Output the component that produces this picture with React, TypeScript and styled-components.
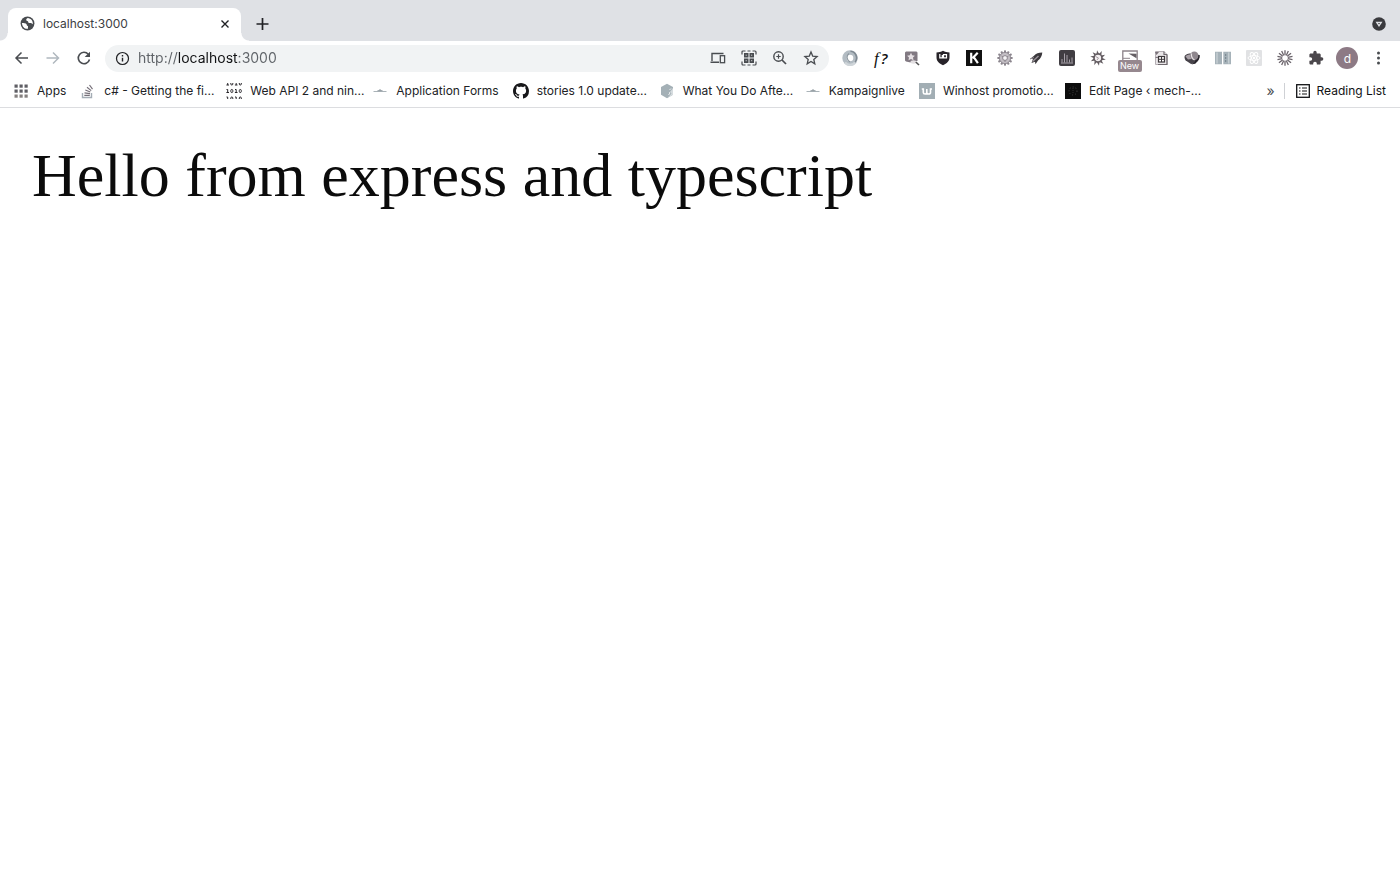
import React from 'react';
import styled, { createGlobalStyle } from 'styled-components';

const GlobalStyle = createGlobalStyle`
  * { box-sizing: border-box; }
  body {
    margin: 0;
    background: #fff;
    color: #202124;
    font-family: Inter, "Liberation Sans", sans-serif;
  }
`;

const Window = styled.div`
  display: flex;
  flex-direction: column;
  min-height: 100vh;
`;

const TabStrip = styled.header`
  display: flex;
  align-items: flex-end;
  height: 41px;
  padding: 0 6px 0 8px;
  background: #dfe1e5;
`;

const Tab = styled.div`
  position: relative;
  display: flex;
  align-items: center;
  width: 233px;
  height: 33px;
  padding: 0 6px 2px 12px;
  border-radius: 8px 8px 0 0;
  background: #fff;

  &::before,
  &::after {
    content: '';
    position: absolute;
    bottom: 0;
    width: 8px;
    height: 8px;
  }
  &::before {
    left: -8px;
    background: radial-gradient(circle at 0 0, transparent 7px, #fff 8px);
  }
  &::after {
    right: -8px;
    background: radial-gradient(circle at 100% 0, transparent 7px, #fff 8px);
  }
`;

const TabTitle = styled.span`
  flex: 1;
  margin-left: 8px;
  font-size: 12px;
  line-height: 16px;
  color: #3c4043;
`;

const IconButton = styled.button<{ $size?: number }>`
  display: flex;
  align-items: center;
  justify-content: center;
  flex: none;
  width: ${(p) => p.$size ?? 31}px;
  height: ${(p) => p.$size ?? 31}px;
  padding: 0;
  border: 0;
  background: none;
  color: #494c50;
  font: inherit;
`;

const TabActions = styled.div`
  display: flex;
  flex: 1;
  align-items: center;
  justify-content: space-between;
  height: 33px;
  padding: 0 0 2px 6px;
`;

const Toolbar = styled.nav`
  display: flex;
  align-items: center;
  height: 34px;
  padding: 0 6px;
`;

const Omnibox = styled.form`
  display: flex;
  flex: 1;
  align-items: center;
  min-width: 0;
  height: 27px;
  margin: 0 5px 0 6px;
  padding: 0 3px 0 10px;
  border-radius: 14px;
  background: #f1f3f4;
`;

const Address = styled.input`
  flex: 1;
  min-width: 0;
  height: 20px;
  margin-left: 8px;
  padding: 0;
  border: 0;
  outline: 0;
  font-family: inherit;
  font-size: 14px;
  line-height: 20px;
  color: #202124;
  background: linear-gradient(90deg, #5f6368 40px, #111214 40px, #111214 100px, #5f6368 100px);
  background-clip: text;
  -webkit-text-fill-color: transparent;
`;

const Extensions = styled.div`
  display: grid;
  grid-template-columns: repeat(18, 1fr);
  justify-items: center;
  align-items: center;
  width: 560px;
`;

const FormulaMark = styled.span`
  font-family: "Liberation Serif", serif;
  font-size: 17px;
  font-style: italic;
  line-height: 20px;
  color: #111;
`;

const QuestionMark = styled.span`
  margin-left: 2px;
  font-family: "Open Sans", sans-serif;
  font-size: 15px;
  font-weight: 600;
`;

const Avatar = styled.span`
  display: flex;
  align-items: center;
  justify-content: center;
  width: 22px;
  height: 22px;
  border-radius: 50%;
  background: #8d7a85;
  font-size: 12px;
  color: #fff;
`;

const BadgedIcon = styled.span`
  position: relative;
  display: flex;
`;

const Badge = styled.span`
  position: absolute;
  top: 10px;
  left: -4px;
  width: 24px;
  border-radius: 2px;
  background: #96888f;
  font-size: 9px;
  line-height: 12px;
  text-align: center;
  color: #fff;
`;

const BookmarkBar = styled.nav`
  display: flex;
  align-items: center;
  height: 33px;
  padding: 0 14px 0 13px;
  border-bottom: 1px solid #dcdde0;
`;

const Bookmarks = styled.div`
  display: flex;
  flex: 1;
  gap: 14px;
  min-width: 0;
`;

const Bookmark = styled.a`
  display: flex;
  flex: none;
  align-items: center;
  gap: 8px;
  color: #202124;
  text-decoration: none;
`;

const BookmarkTitle = styled.span<{ $clipped?: boolean }>`
  width: ${(p) => (p.$clipped ? '108px' : 'auto')};
  font-size: 12px;
  line-height: 16px;
  white-space: nowrap;
`;

const Overflow = styled(IconButton)`
  font-size: 14px;
  padding-bottom: 2px;
`;

const ReadingList = styled.button`
  display: flex;
  align-items: center;
  gap: 6px;
  height: 16px;
  padding: 0 0 0 10px;
  border: 0;
  border-left: 1px solid #cfd1d5;
  background: none;
  font-family: inherit;
  font-size: 12px;
  line-height: 16px;
  color: #111214;
`;

const Page = styled.main`
  flex: 1;
  padding: 31px 32px;
  font-family: "Liberation Serif", "Times New Roman", serif;
  font-size: 62px;
  line-height: 72px;
  color: #0b0b0b;
`;

type IconProps = { size?: number; children: React.ReactNode };

const Line = ({ size = 16, children }: IconProps) => (
  <svg width={size} height={size} viewBox="0 0 16 16" fill="none" stroke="currentColor" strokeWidth="1.5" aria-hidden="true">
    {children}
  </svg>
);

const Solid = ({ size = 16, children }: IconProps) => (
  <svg width={size} height={size} viewBox="0 0 16 16" fill="currentColor" aria-hidden="true">
    {children}
  </svg>
);

const rays = (count: number) => Array.from({ length: count }, (_, i) => (360 / count) * i);

const Globe = () => (
  <Solid size={15}>
    <circle cx="8" cy="8" r="7.4" fill="#484b4f" />
    <path d="M2 7.5c2 .2 4.200.1 5 1.300.5 1 .1 1.700 1.500 1.900v2.800c-3 .8-6-1.500-6.500-6zM8.200 2.200c-1.200.7-1.800 1.300-1.500 2.300.3.800 2 .5 2 1.500 0 1.200 1 1.700 2.300 1.500.8-.1 1.500.6 2.600 1.200.6-3-1.800-6.300-5.400-6.500z" fill="#fff" />
  </Solid>
);

const ExtRing = () => (
  <Solid>
    <circle cx="8" cy="8" r="5.500" fill="none" stroke="#b3bcc3" strokeWidth="4.400" />
    <path d="M3 12.500A6.500 6.500 0 0 0 14 11" fill="none" stroke="#cfd5d9" strokeWidth="2.500" />
    <path d="M8.500 1.200a6.700 6.700 0 0 1 4.500 11" fill="none" stroke="#7f8992" strokeWidth="1.600" />
    <path d="M7 3.500C4 6 4.500 9.500 8 12" fill="none" stroke="#8d979f" strokeWidth="1.200" />
  </Solid>
);

const ExtSearchStar = () => (
  <Solid>
    <path d="M2 1.500h10.500l1 1v8.500H7.500l-1 1.500-4.500-1-1-1v-8z" fill="#817982" />
    <path d="M7 2.800l1.200 2.500 2.700.4-1.900 1.900.5 2.700L7 9l-2.500 1.300.5-2.700-1.900-1.900 2.700-.4z" fill="#e6e0e4" />
    <ellipse cx="9.500" cy="12" rx="3" ry="1.700" fill="#e3dfe2" />
    <path d="M11.800 12l3.200 3" stroke="#555" strokeWidth="1.600" />
  </Solid>
);

const ExtShield = () => (
  <Solid>
    <path d="M8 .8c2 1 4 1.500 6.500 1.600v4.800c0 4-2.600 6.300-6.500 8-3.900-1.700-6.500-4-6.500-8V2.400C4 2.300 6 1.800 8 .8z" fill="#272329" />
    <path d="M4.800 4v3.800h2.500V5M8.500 4.600h3v3.200h-3z" fill="none" stroke="#fff" strokeWidth="1.200" />
  </Solid>
);

const ExtK = () => (
  <Solid>
    <rect width="16" height="16" fill="#111" />
    <path d="M5.200 2.800v10.400M11.700 2.800L6.500 8.200M7.700 7l4.200 6.200" stroke="#fff" strokeWidth="2.200" />
  </Solid>
);

const ExtGear = () => (
  <Solid>
    {rays(12).map((a) => (
      <rect key={a} x="7" y=".4" width="2" height="3" fill="#8b858d" transform={`rotate(${a} 8 8)`} />
    ))}
    <circle cx="8" cy="8" r="5.600" fill="#c3bec4" stroke="#918b93" />
    <circle cx="8" cy="8" r="2.400" fill="#f5f3f5" stroke="#8c868e" />
    <path d="M4.500 6l1.500 1M11.500 6L10 7M8 12v-2" stroke="#8c868e" />
  </Solid>
);

const ExtRocket = () => (
  <Solid>
    <path d="M14.300 2.500C10.500 2.500 8 3.300 6 5.800L2 9l3-.2L3.500 13l3.500-1.200.5 2.400L10 10.500c2.600-2 4-4.500 4.300-8z" fill="#3b383c" />
    <path d="M4.500 11.500l6-5.500" stroke="#9b949b" strokeWidth="1.400" />
    <path d="M2 9l4-1.500" stroke="#8c868c" />
  </Solid>
);

const ExtChart = () => (
  <Solid>
    <rect width="16" height="16" rx="2" fill="#403d42" />
    <path d="M3 12.500V9M5.500 12.500v-9M8 12.500V5M10.500 12.500V9.500M13 12.500V7.500" stroke="#a7a1a9" strokeWidth="1" />
    <path d="M2 13h12" stroke="#a7a1a9" />
  </Solid>
);

const ExtCog = () => (
  <Solid>
    {rays(10).map((a) => (
      <path key={a} d="M6.500 4.500L7 .2l2.500 4.300z" fill="#625b60" transform={`rotate(${a} 8 8)`} />
    ))}
    <circle cx="8" cy="8" r="3.900" fill="#f4f0f2" stroke="#625b60" strokeWidth="1.500" />
    <path d="M5.500 6.500l3 1.500-1.500 2" stroke="#a59ca2" fill="none" />
  </Solid>
);

const ExtSheet = () => (
  <Solid>
    <path d="M.8 13V1h14.400v9" fill="#fff" stroke="#8d848a" strokeWidth="1.300" />
    <path d="M6.500 3.500l8 .2v4.500z" fill="#655f64" />
    <path d="M1 8.300h7" stroke="#8d848a" />
  </Solid>
);

const ExtDocument = () => (
  <Solid>
    <path d="M2.500 1.500h8.500l3 3v10H2.500z" fill="#e9e6e8" stroke="#b5afb4" strokeWidth="1" />
    <path d="M11 1.500v3h3M14 4.500v10H5" fill="none" stroke="#6f696e" strokeWidth="1.200" />
    <path d="M2 2h4l-2.500 3zM2 8l2-1.500L5.500 8" fill="#7a7279" />
    <rect x="5.500" y="6.500" width="6" height="5.500" fill="#fff" stroke="#3c383b" strokeWidth="1.200" />
    <path d="M8.500 6.500V12M5.500 9.300h6" stroke="#3c383b" />
  </Solid>
);

const ExtBall = () => (
  <Solid>
    <path d="M.5 7c0-2 3-3.500 6-3.500L15 5c1 3-.5 6.500-4 8.500L7 14 2.500 11C1 10 .5 8.500.5 7z" fill="#47434a" />
    <path d="M1.500 6.500c1-1.500 3-2 5-2L7.500 9 4 9.500z" fill="#aaa2a8" />
    <circle cx="10.300" cy="5.800" r="4.300" fill="#8f878e" />
    <path d="M7.500 3.500C7 6 8 8.500 10.500 10" stroke="#e8e3e6" fill="none" strokeWidth="1.300" />
    <path d="M15 5c.5 3-1.500 6-4 6.500" stroke="#27232a" fill="none" strokeWidth="1.300" />
    <path d="M7.500 14.500l5.500-4-1.500 3z" fill="#27232a" />
  </Solid>
);

const ExtBooks = () => (
  <Solid>
    <path d="M0 1.700h7v12.600H0zM8.300 1.700H16v12.600H8.300z" fill="#a6b2b9" />
    <path d="M2 2.500v11M13.800 2.500v11" stroke="#d3dadd" strokeWidth="1" />
    <path d="M10.700 4v8" stroke="#74828b" strokeDasharray="2 1" />
  </Solid>
);

const ExtReact = () => (
  <Solid>
    <rect width="16" height="16" rx="1" fill="#e1e2e4" />
    <g fill="none" stroke="#fff">
      <ellipse cx="8" cy="8" rx="6" ry="2.400" />
      <ellipse cx="8" cy="8" rx="6" ry="2.400" transform="rotate(60 8 8)" />
      <ellipse cx="8" cy="8" rx="6" ry="2.400" transform="rotate(120 8 8)" />
    </g>
    <circle cx="8" cy="8" r="1.200" fill="#fff" />
  </Solid>
);

const ExtBurst = () => (
  <Line>
    {rays(14).map((a) => (
      <path key={a} d="M8 .3v4.900" stroke="#696269" strokeWidth="1.300" transform={`rotate(${a} 8 8)`} />
    ))}
  </Line>
);

const ExtPuzzle = () => (
  <Solid>
    <path d="M13.700 7.300h-1V4.700c0-.7-.6-1.300-1.300-1.300H8.700v-1a1.700 1.700 0 0 0-3.400 0v1H2.700c-.7 0-1.300.6-1.300 1.300v2.500h1a1.800 1.800 0 0 1 0 3.600h-1v2.500c0 .7.6 1.300 1.300 1.300h2.500v-1a1.800 1.800 0 0 1 3.600 0v1h2.500c.7 0 1.300-.6 1.300-1.300v-2.600h1a1.700 1.700 0 0 0 .1-3.400z" fill="#4b474c" />
  </Solid>
);

const DotsMenu = () => (
  <Solid>
    <circle cx="8.500" cy="3" r="1.500" />
    <circle cx="8.500" cy="8" r="1.500" />
    <circle cx="8.500" cy="13" r="1.500" />
  </Solid>
);

const extensions: { label: string; icon: React.ReactNode }[] = [
  { label: 'JSON viewer', icon: <ExtRing /> },
  { label: 'Font finder', icon: <FormulaMark>f<QuestionMark>?</QuestionMark></FormulaMark> },
  { label: 'Saved searches', icon: <ExtSearchStar /> },
  { label: 'Shield', icon: <ExtShield /> },
  { label: 'K', icon: <ExtK /> },
  { label: 'Settings', icon: <ExtGear /> },
  { label: 'Rocket', icon: <ExtRocket /> },
  { label: 'Charts', icon: <ExtChart /> },
  { label: 'Debugger', icon: <ExtCog /> },
  { label: 'Screen capture', icon: <BadgedIcon><ExtSheet /><Badge>New</Badge></BadgedIcon> },
  { label: 'Documents', icon: <ExtDocument /> },
  { label: 'Sphere', icon: <ExtBall /> },
  { label: 'Reader', icon: <ExtBooks /> },
  { label: 'React tools', icon: <ExtReact /> },
  { label: 'Loom', icon: <ExtBurst /> },
  { label: 'Extensions', icon: <ExtPuzzle /> },
  { label: 'Profile', icon: <Avatar>d</Avatar> },
  { label: 'Menu', icon: <DotsMenu /> },
];

const AppsIcon = () => (
  <Solid>
    {[1.500, 6.500, 11.500].map((y, row) =>
      [1.500, 6.500, 11.500].map((x) => (
        <rect key={`${x}-${y}`} x={x} y={y} width="3.200" height="3.200" fill={row === 2 ? '#85807f' : '#5f5e64'} />
      )),
    )}
  </Solid>
);

const StackIcon = () => (
  <Line>
    <path d="M2.500 10v4.500h9V10" stroke="#a4adb5" strokeWidth="1.400" />
    <path d="M4.300 12.300h5.500M4.500 9.800l5.500.8M5.300 7l5 2M7 4.300l4.200 3.300M9.500 2l3 4.200" stroke="#77717a" strokeWidth="1.200" />
  </Line>
);

const BinaryRow = ({ y }: { y: number }) => (
  <g>
    <path d={`M.5 ${y + 0.5}h1.200v3M.4 ${y + 3.5}h2.600M9 ${y + 0.5}h1.200v3M8.900 ${y + 3.5}h2.600`} />
    <rect x="4.800" y={y + 0.5} width="2" height="3" rx="1" />
    <rect x="13.300" y={y + 0.5} width="2" height="3" rx="1" />
  </g>
);

const BinaryIcon = () => (
  <svg width="16" height="16" viewBox="0 0 16 16" fill="none" stroke="#29262b" aria-hidden="true">
    <BinaryRow y={-1.500} />
    <BinaryRow y={6} />
    <BinaryRow y={13.500} />
  </svg>
);

const DashIcon = () => (
  <Line>
    <path d="M1.500 8.500h13" stroke="#aab3b8" strokeWidth="1" />
    <path d="M5.500 7.700h5M8 6v2" stroke="#8e989e" strokeWidth="1" />
  </Line>
);

const GithubIcon = () => (
  <Solid>
    <path
      fill="#17171a"
      d="M8 0C3.580 0 0 3.580 0 8c0 3.540 2.290 6.530 5.470 7.590.4.070.55-.17.55-.38 0-.19-.01-.82-.01-1.490-2.010.37-2.530-.49-2.690-.94-.09-.23-.48-.94-.82-1.130-.28-.15-.68-.52-.01-.53.63-.01 1.080.58 1.230.82.72 1.210 1.870.87 2.330.66.07-.52.28-.87.51-1.070-1.780-.2-3.640-.89-3.640-3.950 0-.87.31-1.590.82-2.150-.08-.2-.36-1.020.08-2.120 0 0 .67-.21 2.200.82.64-.18 1.320-.27 2-.27s1.360.09 2 .27c1.530-1.040 2.200-.82 2.200-.82.44 1.100.16 1.920.08 2.120.51.56.82 1.270.82 2.150 0 3.070-1.870 3.750-3.650 3.950.29.25.54.73.54 1.480 0 1.070-.01 1.930-.01 2.200 0 .21.15.46.55.38A8.010 8.010 0 0 0 16 8c0-4.420-3.580-8-8-8z"
    />
  </Solid>
);

const HexIcon = () => (
  <Solid>
    <path d="M8 .8l6 3.300v7.600l-6 3.500-6-3.500V4.100z" fill="#a4b0b6" />
    <path d="M14 5l-3 4 1.500 1.500-3.500 4 5-2.800z" fill="#d6dcdf" />
    <path d="M12 5.500L10.500 7M10 9.500l1 .5-1.500 2" stroke="#eef1f2" fill="none" />
  </Solid>
);

const WinhostIcon = () => (
  <Solid>
    <rect width="16" height="16" fill="#a2aeb4" />
    <path d="M2.800 6h1.500v3.500c0 2 3.500 2 3.500 0V6M7.800 9.500c0 2 3.700 2 3.700 0V6H13" fill="none" stroke="#fff" strokeWidth="1.600" />
  </Solid>
);

const DarkSquareIcon = () => (
  <Solid>
    <rect width="16" height="16" fill="#0d0d0d" />
    <circle cx="8" cy="8" r="4" fill="none" stroke="#4a4a4a" strokeWidth="1" strokeDasharray="1 2" />
    <path d="M8 5v5" stroke="#353535" strokeDasharray="1 1" />
  </Solid>
);

const bookmarks: { title: string; icon: React.ReactNode; clipped?: boolean }[] = [
  { title: 'Apps', icon: <AppsIcon /> },
  { title: 'c# - Getting the fi...', icon: <StackIcon />, clipped: true },
  { title: 'Web API 2 and nin...', icon: <BinaryIcon />, clipped: true },
  { title: 'Application Forms', icon: <DashIcon /> },
  { title: 'stories 1.0 update...', icon: <GithubIcon />, clipped: true },
  { title: 'What You Do Afte...', icon: <HexIcon />, clipped: true },
  { title: 'Kampaignlive', icon: <DashIcon /> },
  { title: 'Winhost promotio...', icon: <WinhostIcon />, clipped: true },
  { title: 'Edit Page ‹ mech-...', icon: <DarkSquareIcon />, clipped: true },
];

export default function App() {
  return (
    <Window>
      <GlobalStyle />
      <TabStrip>
        <Tab>
          <Globe />
          <TabTitle>localhost:3000</TabTitle>
          <IconButton $size={20} aria-label="Close tab">
            <Line size={14}><path d="M4 4l8 8M12 4l-8 8" stroke="#202124" strokeWidth="1.600" /></Line>
          </IconButton>
        </Tab>
        <TabActions>
          <IconButton aria-label="New tab">
            <Line><path d="M7.500 2v12M1.500 8h12" stroke="#202124" strokeWidth="1.700" /></Line>
          </IconButton>
          <IconButton aria-label="Search tabs">
            <Solid>
              <circle cx="8" cy="8" r="6.800" fill="#3a3a3e" />
              <path d="M4.500 5.700h7L8 11z" fill="#dfe1e5" />
              <path d="M7 7h2L8 8.600z" fill="#3a3a3e" />
            </Solid>
          </IconButton>
        </TabActions>
      </TabStrip>

      <Toolbar aria-label="Navigation">
        <IconButton aria-label="Back">
          <Line><path d="M14 8H2M7.500 2.500L2 8l5.500 5.500" /></Line>
        </IconButton>
        <IconButton aria-label="Forward">
          <Line><path d="M1.500 8h12M8 2.500L13.500 8 8 13.500" stroke="#b0b8bf" /></Line>
        </IconButton>
        <IconButton aria-label="Reload">
          <Line>
            <path d="M12.300 4.200A5.700 5.700 0 1 0 13.500 9.500" strokeWidth="1.600" />
            <path d="M14 1.700v5.300H8.700z" fill="currentColor" stroke="none" />
          </Line>
        </IconButton>
        <Omnibox onSubmit={(e) => e.preventDefault()}>
          <Line size={15}>
            <circle cx="8" cy="8" r="6.400" strokeWidth="1.300" />
            <path d="M8 7.200v4M8 4.300v1.600" />
          </Line>
          <Address aria-label="Address" defaultValue="http://localhost:3000" spellCheck={false} />
          <IconButton type="button" aria-label="Devices">
            <Line>
              <path d="M2 11V3.500h11.500M.5 12.300h8.500" strokeWidth="1.400" />
              <rect x="10.300" y="5.700" width="4.300" height="7" strokeWidth="1.300" />
            </Line>
          </IconButton>
          <IconButton type="button" aria-label="QR code">
            <Line>
              <path d="M1 4.500V2a1 1 0 0 1 1-1h2.500M11.500 1H14a1 1 0 0 1 1 1v2.500M15 11.500V14a1 1 0 0 1-1 1h-2.500M4.500 15H2a1 1 0 0 1-1-1v-2.500M6.500 1h3M6.500 15h3" strokeWidth="1.200" />
              <path d="M3 3h4.500v4.500H3zM8.500 3H13v4.500H8.500zM3 8.500h4.500V13H3zM8.500 8.500H13V13H8.500z" fill="currentColor" stroke="none" />
              <path d="M4.700 5.200h1M10.200 5.200h1M4.700 10.700h1M10.200 10.700h1" stroke="#dfe1e3" strokeWidth="1" />
            </Line>
          </IconButton>
          <IconButton type="button" aria-label="Zoom">
            <Line>
              <circle cx="6.500" cy="6.500" r="4.700" strokeWidth="1.400" />
              <path d="M10 10l4 4" strokeWidth="1.700" />
              <path d="M6.500 4.300v4.400M4.300 6.500h4.400" strokeWidth="1.200" />
            </Line>
          </IconButton>
          <IconButton type="button" aria-label="Bookmark this page">
            <Line><path d="M8 2l1.700 4.100 4.400.4-3.300 2.900 1 4.400L8 11.500l-3.800 2.300 1-4.400-3.300-2.900 4.400-.4z" strokeWidth="1.300" /></Line>
          </IconButton>
        </Omnibox>
        <Extensions>
          {extensions.map(({ label, icon }) => (
            <IconButton key={label} aria-label={label}>{icon}</IconButton>
          ))}
        </Extensions>
      </Toolbar>

      <BookmarkBar aria-label="Bookmarks">
        <Bookmarks>
          {bookmarks.map(({ title, icon, clipped }) => (
            <Bookmark key={title} href="#">
              {icon}
              <BookmarkTitle $clipped={clipped}>{title}</BookmarkTitle>
            </Bookmark>
          ))}
        </Bookmarks>
        <Overflow $size={26} aria-label="More bookmarks">»</Overflow>
        <ReadingList>
          <Line>
            <rect x="1.700" y="1.700" width="12.600" height="12.600" strokeWidth="1.300" />
            <path d="M4 5h1.500M4 8h1.500M4 11h1.500M7 5h5M7 8h5M7 11h5" strokeWidth="1.100" />
          </Line>
          Reading List
        </ReadingList>
      </BookmarkBar>

      <Page>Hello from express and typescript</Page>
    </Window>
  );
}
